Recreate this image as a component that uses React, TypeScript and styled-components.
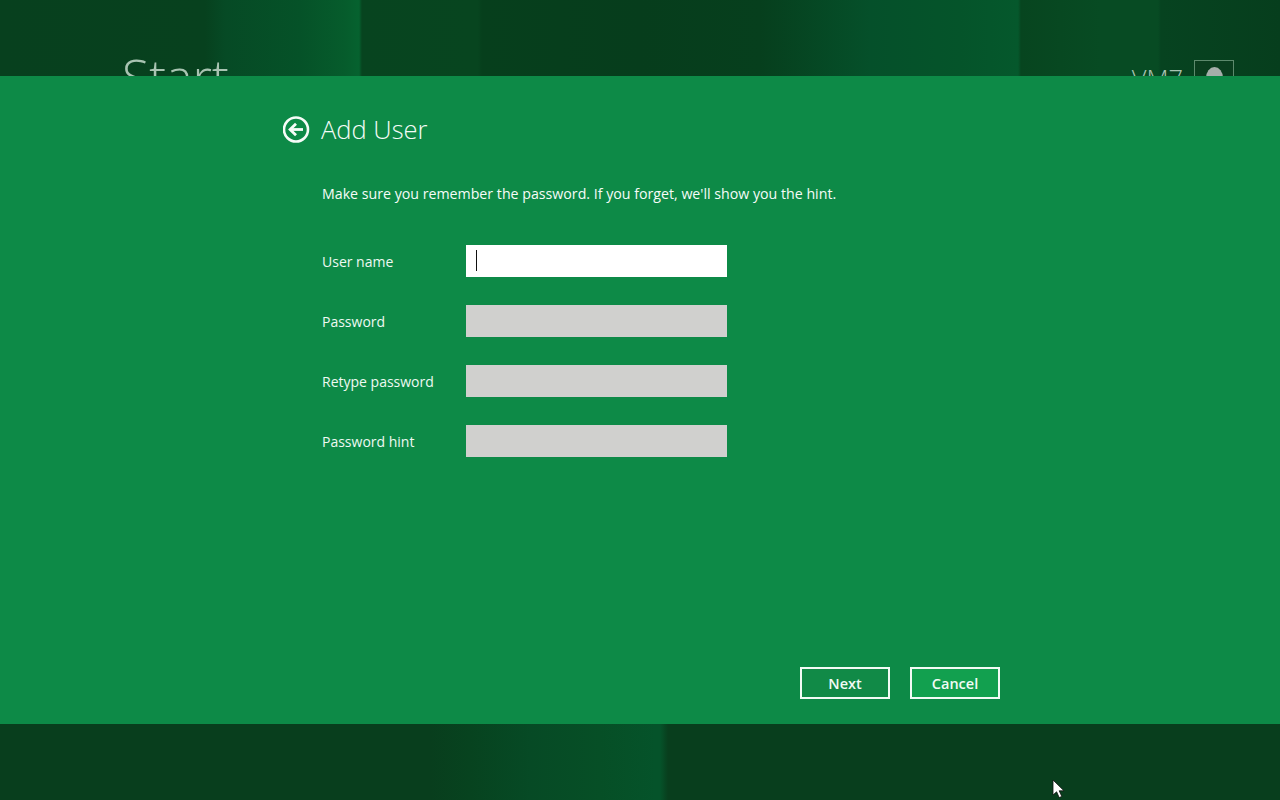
import React from "react";
import styled, { createGlobalStyle } from "styled-components";

const Global = createGlobalStyle`
  html, body { margin: 0; padding: 0; width: 1280px; height: 800px; overflow: hidden; background: #083e1d; }
  * { box-sizing: border-box; }
`;

const Screen = styled.div`
  position: relative;
  width: 1280px;
  height: 800px;
  overflow: hidden;
  font-family: "Open Sans", "Noto Sans", sans-serif;
  background-color: #083e1d;
  background-repeat: no-repeat;
  background-size: 1280px 76px, 1280px 76px;
  background-position: 0 0, 0 724px;
  background-image:
    linear-gradient(to right,
      #07401e 0, #07411e 205px, #064a25 225px, #055228 300px, #065c2c 345px, #06622f 359px, #07441f 362px, #07451f 470px, #07451f 478px, #063f1c 482px,
      #063d1c 640px, #063f1d 760px, #05502a 870px, #05542a 960px, #05582c 1018px, #07451f 1021px, #074b23 1100px, #074b23 1158px, #064320 1161px, #063e1d 1280px),
    linear-gradient(to right,
      #083e1d 0, #083e1d 380px, #083e1d 430px, #07431f 470px, #064a25 530px, #064f26 600px, #05532a 655px, #05532a 660px, #083e1d 668px, #083e1d 1280px);
`;

const StartHeader = styled.header`
  display: flex;
  justify-content: space-between;
  padding: 47px 46px 0 122px;
`;

const StartTitle = styled.h1`
  margin: 0;
  font-size: 50px;
  line-height: 60px;
  font-weight: 300;
  color: #a9c4b2;
`;

const Account = styled.div`
  display: flex;
  gap: 11px;
  padding-top: 13px;
`;

const AccountName = styled.span`
  font-size: 25.5px;
  line-height: 32px;
  font-weight: 300;
  margin-top: 2px;
  color: #a9c4b2;
`;

const Avatar = styled.div`
  width: 40px;
  height: 40px;
  border: 1px solid #5d8a6d;
  background: #0a3d1e;
  display: flex;
  justify-content: center;
  padding: 6px 0 0 1px;
`;

const AvatarHead = styled.div`
  width: 17px;
  height: 22px;
  border-radius: 50%;
  background: #a6aeaa;
`;

const Dialog = styled.section`
  position: absolute;
  left: 0;
  top: 76px;
  width: 1280px;
  height: 648px;
  background: #0d8a47;
  color: #f2fbf5;
  padding: 35px 280px 0 283px;
  display: flex;
  flex-direction: column;
`;

const TitleRow = styled.div`
  display: flex;
  align-items: center;
  gap: 11px;
  height: 36px;
`;

const BackButton = styled.svg`
  width: 27px;
  height: 27px;
  flex: none;
  display: block;
`;

const Title = styled.h2`
  margin: 0;
  font-size: 25.5px;
  line-height: 36px;
  font-weight: 300;
  color: #f4fcf7;
`;

const Intro = styled.p`
  margin: 37px 0 0 39px;
  font-size: 14.2px;
  line-height: 20px;
  height: 20px;
  color: #f6fcf8;
  white-space: nowrap;
`;

const Form = styled.div`
  margin: 41px 0 0 39px;
  display: flex;
  flex-direction: column;
  gap: 28px;
`;

const Row = styled.label`
  display: flex;
  align-items: center;
  height: 32px;
`;

const FieldLabel = styled.span`
  width: 144px;
  padding-top: 2px;
  font-size: 14px;
  line-height: 20px;
  color: #eef9f2;
`;

const Field = styled.div<{ $active?: boolean }>`
  width: 261px;
  height: 32px;
  background: ${(p) => (p.$active ? "#ffffff" : "#d0d0ce")};
  display: flex;
  align-items: center;
  padding-left: 10px;
`;

const Caret = styled.span`
  width: 1px;
  height: 21px;
  margin-top: -2px;
  background: #111;
`;

const Actions = styled.div`
  margin-top: auto;
  margin-bottom: 25px;
  display: flex;
  justify-content: flex-end;
  gap: 20px;
`;

const ActionButton = styled.button<{ $hover?: boolean }>`
  width: 90px;
  height: 32px;
  padding: 0;
  border: 2px solid #f2fbf5;
  background: ${(p) => (p.$hover ? "#12a04f" : "#118a47")};
  color: #f2fbf5;
  font-family: inherit;
  font-size: 14.5px;
  font-weight: 600;
`;

const Pointer = styled.svg`
  position: absolute;
  left: 1052px;
  top: 779px;
  width: 13px;
  height: 20px;
`;

export default function App() {
  return (
    <Screen>
      <Global />
      <StartHeader>
        <StartTitle>Start</StartTitle>
        <Account>
          <AccountName>VM7</AccountName>
          <Avatar>
            <AvatarHead />
          </Avatar>
        </Account>
      </StartHeader>
      <Dialog>
        <TitleRow>
          <BackButton viewBox="0 0 27 27" fill="none">
            <circle cx="13" cy="13.5" r="12" stroke="#f6fcf8" strokeWidth="2.6" />
            <path d="M20 13.5H8.5" stroke="#f6fcf8" strokeWidth="2.8" />
            <path d="M13 7.8L7.1 13.5L13 19.2" stroke="#f6fcf8" strokeWidth="2.8" />
          </BackButton>
          <Title>Add User</Title>
        </TitleRow>
        <Intro>Make sure you remember the password. If you forget, we'll show you the hint.</Intro>
        <Form>
          <Row>
            <FieldLabel>User name</FieldLabel>
            <Field $active>
              <Caret />
            </Field>
          </Row>
          <Row>
            <FieldLabel>Password</FieldLabel>
            <Field />
          </Row>
          <Row>
            <FieldLabel>Retype password</FieldLabel>
            <Field />
          </Row>
          <Row>
            <FieldLabel>Password hint</FieldLabel>
            <Field />
          </Row>
        </Form>
        <Actions>
          <ActionButton>Next</ActionButton>
          <ActionButton $hover>Cancel</ActionButton>
        </Actions>
      </Dialog>
      <Pointer viewBox="0 0 13 20">
        <path d="M1 1V16L4.6 12.8L7.2 18.6L9.8 17.4L7.2 11.8H12Z" fill="#fff" stroke="#111" strokeWidth="0.8" />
      </Pointer>
    </Screen>
  );
}
